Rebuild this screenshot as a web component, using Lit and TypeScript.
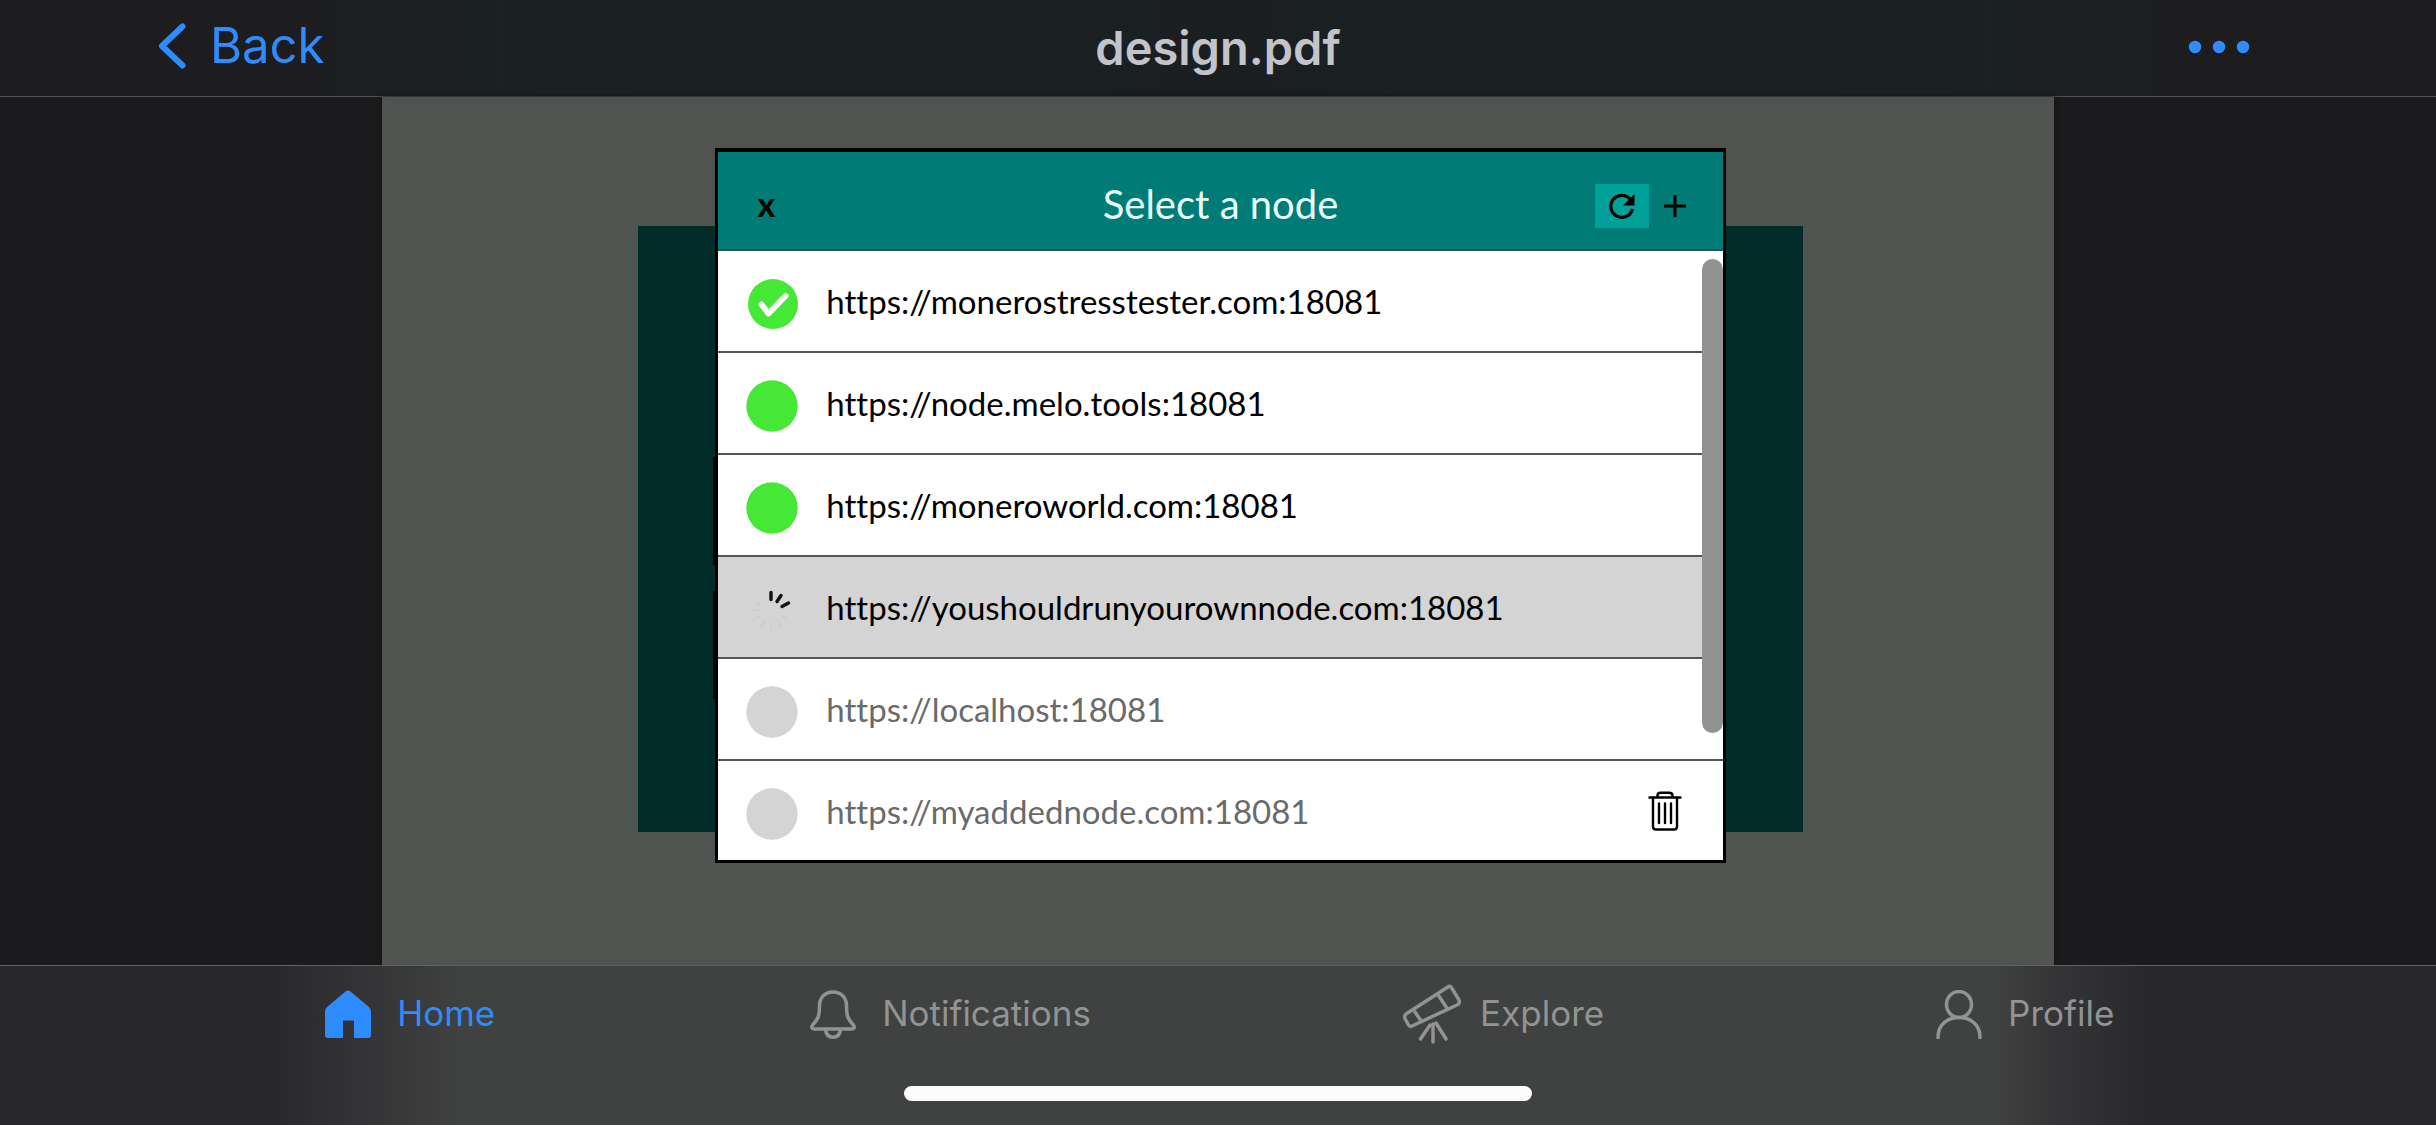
import { LitElement, html, css, svg, nothing } from "lit";
import { customElement, property, state } from "lit/decorators.js";
import { classMap } from "lit/directives/class-map.js";

type Status = "selected" | "online" | "loading" | "offline";

interface NodeEntry {
  url: string;
  status: Status;
  removable?: boolean;
}

const NODES: NodeEntry[] = [
  { url: "https://monerostresstester.com:18081", status: "selected" },
  { url: "https://node.melo.tools:18081", status: "online" },
  { url: "https://moneroworld.com:18081", status: "online" },
  { url: "https://youshouldrunyourownnode.com:18081", status: "loading" },
  { url: "https://localhost:18081", status: "offline" },
  { url: "https://myaddednode.com:18081", status: "offline", removable: true },
];

@customElement("node-status")
class NodeStatus extends LitElement {
  @property() status: Status = "offline";

  static styles = css`
    :host {
      display: block;
      width: 52px;
      height: 52px;
    }
    svg {
      display: block;
    }
    .on {
      fill: #45e835;
    }
    .off {
      fill: #d4d4d4;
    }
    .tick {
      fill: none;
      stroke: #fff;
      stroke-width: 6;
      stroke-linecap: round;
      stroke-linejoin: round;
    }
    .spoke {
      stroke: #111;
      stroke-width: 3.4;
      stroke-linecap: round;
    }
    .faint {
      stroke: #cecece;
      stroke-width: 2;
      stroke-linecap: round;
    }
  `;

  private shape() {
    switch (this.status) {
      case "selected":
        return svg`<circle class="on" cx="27" cy="26" r="25"/><path class="tick" d="M15.500 26.500l7 9L39.500 18"/>`;
      case "online":
        return svg`<circle class="on" cx="26" cy="26" r="25.700"/>`;
      case "loading":
        return svg`
          <path class="spoke" d="M25 8.500v7M35 11.500l-4 6M42.500 19l-6.500 3.500"/>
          <path class="faint" d="M25 39v6M31 36l4 6M36 32l6 4M19 36l-4 6M14 32l-6 4M12 26H6M14 21l-5-3"/>`;
      default:
        return svg`<circle class="off" cx="26" cy="26" r="25.700"/>`;
    }
  }

  render() {
    return html`<svg width="52" height="52" viewBox="0 0 52 52" aria-hidden="true">${this.shape()}</svg>`;
  }
}

@customElement("node-dialog")
class NodeDialog extends LitElement {
  @state() private nodes = NODES;

  static styles = css`
    :host {
      display: block;
      box-sizing: border-box;
      border: 3px solid #000;
      border-top-width: 4px;
      background: #fff;
      color: #000;
      font-family: Lato, "Open Sans", sans-serif;
      font-variant-ligatures: none;
    }
    button {
      margin: 0;
      padding: 0;
      border: 0;
      background: none;
      color: inherit;
      font: inherit;
      font-variant-ligatures: none;
      cursor: pointer;
    }
    svg {
      display: block;
    }
    .head {
      display: grid;
      grid-template-columns: 1fr auto 1fr;
      align-items: center;
      box-sizing: border-box;
      height: 99px;
      padding: 11px 30px 0;
      border-bottom: 2px solid #2b5552;
      background: #007b75;
    }
    .close {
      justify-self: start;
      width: 36px;
      padding-bottom: 4px;
      font-size: 34px;
      line-height: 44px;
      font-weight: 700;
    }
    .title {
      margin: 0;
      padding-bottom: 4px;
      color: #e9fffc;
      font-size: 40px;
      line-height: 48px;
      font-weight: 400;
    }
    .tools {
      display: flex;
      justify-self: end;
      gap: 8px;
    }
    .tool {
      display: grid;
      place-items: center;
      width: 36px;
      height: 44px;
    }
    .refresh {
      width: 54px;
      background: #00a199;
    }
    .body {
      position: relative;
    }
    .list {
      margin: 0;
      padding: 0;
      list-style: none;
    }
    .row {
      display: flex;
      align-items: center;
      gap: 28px;
      box-sizing: border-box;
      height: 102px;
      margin-right: 21px;
      padding: 0 28px;
      border-bottom: 2px solid #555;
      font-size: 33px;
      line-height: 40px;
    }
    .row.wide {
      margin-right: 0;
      padding-right: 40px;
    }
    .row.last {
      height: 99px;
      border-bottom: 0;
    }
    .row.loading {
      background: #d4d4d4;
    }
    .row.offline {
      color: #6a6a6a;
    }
    .status {
      margin-top: 6px;
    }
    .pick {
      flex: 1;
      text-align: left;
    }
    .remove {
      color: #000;
    }
    .thumb {
      position: absolute;
      top: 8px;
      right: 0;
      width: 21px;
      height: 474px;
      border-radius: 11px;
      background: #929292;
    }
  `;

  private remove(url: string) {
    this.nodes = this.nodes.filter((n) => n.url !== url);
  }

  private row(node: NodeEntry, index: number) {
    const last = index === this.nodes.length - 1;
    const classes = { row: true, [node.status]: true, wide: index > 3, last };
    return html`<li class=${classMap(classes)}>
      <node-status class="status" .status=${node.status}></node-status>
      <button class="pick" type="button">${node.url}</button>
      ${node.removable
        ? html`<button class="remove" type="button" aria-label="Remove node" @click=${() => this.remove(node.url)}>
            <svg width="36" height="40" viewBox="0 0 36 40" fill="none" stroke="currentColor" stroke-width="2.400" stroke-linecap="round" stroke-linejoin="round">
              <path d="M2.500 6.500h31M10.500 6V4.500Q10.500 1.700 13.500 1.700H22Q25.500 1.700 25.500 4.500V6"/>
              <path d="M6 7v28.500Q6 38.500 9 38.500H27Q30 38.500 30 35.500V7M12 12.500v19.500M18 12.500v19.500M24 12.500v19.500"/>
            </svg>
          </button>`
        : nothing}
    </li>`;
  }

  render() {
    return html`
      <header class="head">
        <button class="close" type="button" aria-label="Close">x</button>
        <h2 class="title">Select a node</h2>
        <div class="tools">
          <button class="tool refresh" type="button" aria-label="Refresh">
            <svg width="26" height="26" viewBox="0 0 26 26">
              <path d="M21.500 6.500A11 11 0 1 0 23.500 16" fill="none" stroke="currentColor" stroke-width="3.200"/>
              <path d="M25.500 1v11.500H14z" fill="currentColor"/>
            </svg>
          </button>
          <button class="tool" type="button" aria-label="Add node">
            <svg width="22" height="22" viewBox="0 0 22 22">
              <path d="M11 0v22M0 11h22" stroke="currentColor" stroke-width="3"/>
            </svg>
          </button>
        </div>
      </header>
      <div class="body">
        <ul class="list">
          ${this.nodes.map((n, i) => this.row(n, i))}
        </ul>
        <div class="thumb"></div>
      </div>
    `;
  }
}

const TAB_ICONS = {
  home: svg`<path fill="currentColor" d="M20.500 1.500Q23 -.5 25.500 1.500L44 17Q46 19 46 21.500V45Q46 48 43 48H29V30.500H18V48H3Q0 48 0 45V21.500Q0 19 2 17Z"/>`,
  bell: svg`<g fill="none" stroke="currentColor" stroke-width="3.500" stroke-linejoin="round">
    <path d="M23 2C14 2 9.500 8.500 9.500 16C9.500 27 7.500 29.500 3 34.500Q0 38.500 4 39H42Q46 38.500 43 34.500C38.500 29.500 36.500 27 36.500 16C36.500 8.500 32 2 23 2Z"/>
    <path d="M15.500 39.500C16 44.500 19 47.200 23 47.200S30 44.500 30.500 39.500"/></g>`,
  scope: svg`<g fill="none" stroke="currentColor" stroke-width="3.500" stroke-linejoin="round" stroke-linecap="round">
    <path d="M44.500 3.200Q46.500 1.200 48.500 3.700L56 16Q57 19 55 20.500L9 42Q7 43 5.500 41L2 34.500Q1 32 3 30Z"/>
    <path d="M35.500 11.500L44.500 25M12 28L18.500 37.500"/>
    <path d="M27 41L17.500 55M30 40V58M33 39L43 55"/></g>`,
  person: svg`<g fill="none" stroke="currentColor" stroke-width="3.500" stroke-linecap="round">
    <ellipse cx="23" cy="14.500" rx="12.500" ry="13"/>
    <path d="M2 47.500C2 35 11 27.500 23 27.500S44 35 44 47.500"/></g>`,
};

@customElement("app-root")
class AppRoot extends LitElement {
  static styles = css`
    :host {
      display: flex;
      flex-direction: column;
      min-height: 100vh;
      background: #1b1b1d;
      font-family: Inter, "Liberation Sans", sans-serif;
    }
    svg {
      display: block;
    }
    .bar {
      display: grid;
      grid-template-columns: 1fr auto 1fr;
      align-items: center;
      box-sizing: border-box;
      height: 97px;
      padding: 0 158px;
      border-bottom: 1px solid #505254;
      background: linear-gradient(90deg, #1d1d20 12%, #1b2123 22%, #1a2123 40%, #1b1e21 50%, #1a2123 60%, #1b2123 80%, #1d1d20 90%);
    }
    .back {
      display: flex;
      align-items: center;
      justify-self: start;
      gap: 24px;
      padding-bottom: 4px;
      color: #2f8cff;
      font-size: 49px;
      line-height: 60px;
      text-decoration: none;
    }
    .name {
      margin: 0;
      color: #c3c4ca;
      font-size: 47px;
      line-height: 60px;
      font-weight: 600;
    }
    .more {
      justify-self: end;
      padding: 8px 28px 10px;
      border: 0;
      background: none;
      color: #2f8cff;
    }
    .stage {
      display: flex;
      flex: 1;
      justify-content: center;
    }
    .page {
      display: grid;
      grid-template-columns: 1fr;
      justify-items: center;
      align-items: start;
      box-sizing: border-box;
      width: 68.65%;
      padding: 51px 0 0 5px;
      background: #4f5451;
      box-shadow: 0 0 6px #111;
    }
    .device,
    .dialog {
      grid-area: 1 / 1;
    }
    .device {
      width: 69.9%;
      height: 606px;
      margin-top: 78px;
      background: #012b29;
    }
    .dialog {
      position: relative;
      width: 60.6%;
    }
    .key {
      position: absolute;
      left: -2px;
      width: 3px;
      height: 108px;
      background: #000;
    }
    .key.upper {
      top: 309px;
    }
    .key.lower {
      top: 443px;
    }
    .foot {
      display: flex;
      flex-direction: column;
      align-items: center;
      justify-content: space-between;
      box-sizing: border-box;
      height: 160px;
      padding: 18px 0 24px;
      border-top: 1px solid #606261;
      background: linear-gradient(90deg, #28282a 11%, #343436 15%, #404141 19%, #404141 82%, #363638 84%, #29292b 88%);
    }
    .tabs {
      display: grid;
      grid-template-columns: 485fr 593fr 533fr 500fr;
      align-self: stretch;
      margin-left: 13.35%;
    }
    .tab {
      display: flex;
      align-items: center;
      gap: 26px;
      height: 60px;
      color: #929393;
      font-size: 35px;
      line-height: 44px;
      text-decoration: none;
    }
    .tab span {
      padding-bottom: 2px;
    }
    .tab.scope {
      gap: 18px;
    }
    .tab.current {
      color: #2f8cff;
    }
    .indicator {
      width: 25.74%;
      height: 15px;
      border-radius: 8px;
      background: #fcfcfc;
    }
  `;

  private tab(label: string, icon: unknown, width: number, height: number, kind: string) {
    return html`<a class="tab ${kind}" href="#${label.toLowerCase()}">
      <svg width=${width} height=${height} viewBox="0 0 ${width} ${height}" aria-hidden="true">${icon}</svg>
      <span>${label}</span>
    </a>`;
  }

  render() {
    return html`
      <header class="bar">
        <a class="back" href="#back">
          <svg width="28" height="46" viewBox="0 0 28 46" aria-hidden="true">
            <path d="M24.500 3.500L4 23L24.500 42.500" fill="none" stroke="currentColor" stroke-width="6" stroke-linecap="round" stroke-linejoin="round"/>
          </svg>
          <span>Back</span>
        </a>
        <h1 class="name">design.pdf</h1>
        <button class="more" type="button" aria-label="More">
          <svg width="62" height="14" viewBox="0 0 62 14" fill="currentColor">
            <circle cx="7" cy="7" r="6.200"/><circle cx="31" cy="7" r="6.200"/><circle cx="55" cy="7" r="6.200"/>
          </svg>
        </button>
      </header>
      <main class="stage">
        <div class="page">
          <div class="device"></div>
          <div class="dialog">
            <div class="key upper"></div>
            <div class="key lower"></div>
            <node-dialog></node-dialog>
          </div>
        </div>
      </main>
      <footer class="foot">
        <nav class="tabs">
          ${this.tab("Home", TAB_ICONS.home, 46, 48, "current")}
          ${this.tab("Notifications", TAB_ICONS.bell, 46, 49, "")}
          ${this.tab("Explore", TAB_ICONS.scope, 59, 60, "scope")}
          ${this.tab("Profile", TAB_ICONS.person, 46, 49, "")}
        </nav>
        <div class="indicator"></div>
      </footer>
    `;
  }
}
